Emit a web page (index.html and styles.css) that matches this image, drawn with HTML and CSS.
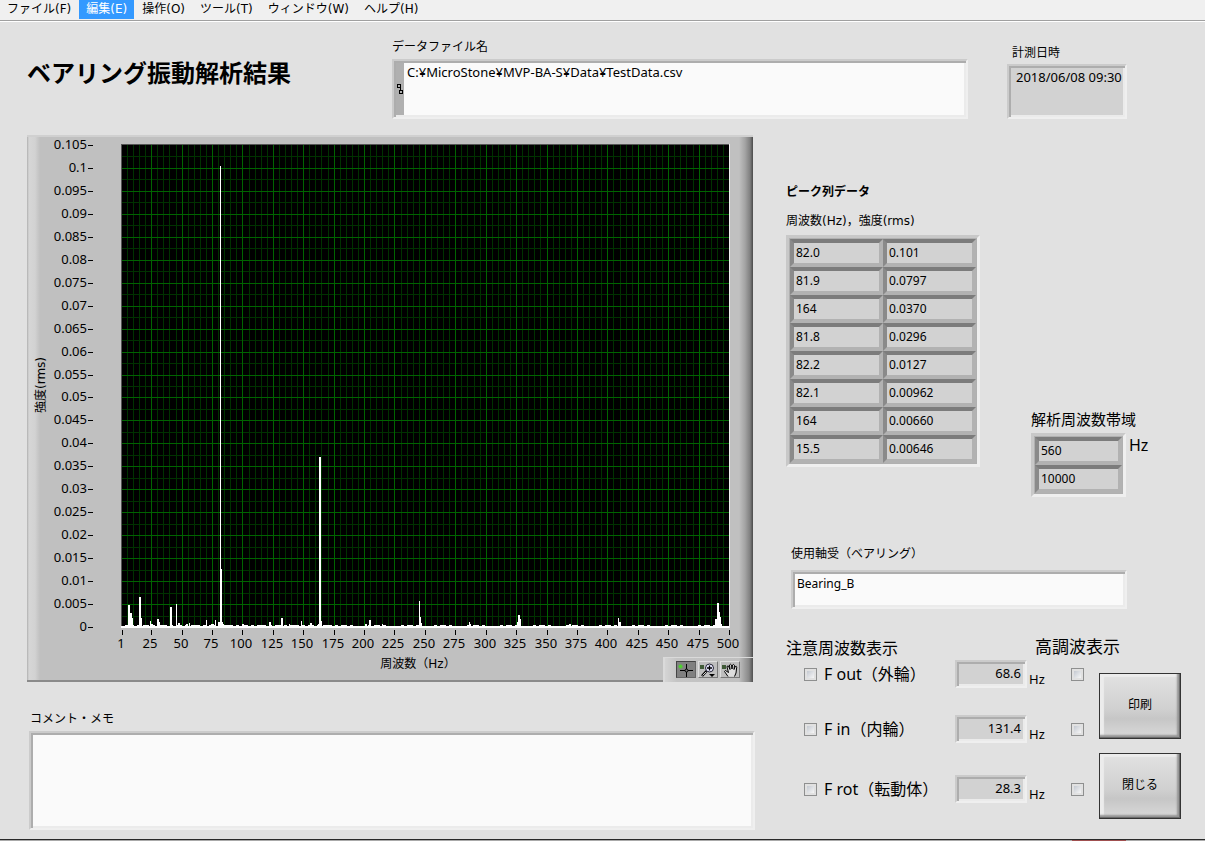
FILE: index.html
```html
<!DOCTYPE html>
<html lang="ja">
<head>
<meta charset="utf-8">
<meta name="viewport" content="width=device-width, initial-scale=1">
<title>ベアリング振動解析結果</title>
<link rel="stylesheet" href="styles.css">
</head>
<body>
<nav class="menu" aria-label="メニュー">
  <button type="button">ファイル(F)</button>
  <button type="button" class="active">編集(E)</button>
  <button type="button">操作(O)</button>
  <button type="button">ツール(T)</button>
  <button type="button">ウィンドウ(W)</button>
  <button type="button">ヘルプ(H)</button>
</nav>

<main class="panel">
  <header class="top">
    <h1>ベアリング振動解析結果</h1>
    <div class="field">
      <label for="path">データファイル名</label>
      <div class="sunken path-box">
        <span class="path-mark">
          <svg width="6" height="10" viewBox="0 0 6 10" fill="none" stroke="#000" shape-rendering="crispEdges" aria-hidden="true"><path d="M.5 .5h3v3h-3zM2.5 6.5h3v3h-3zM3.5 3.5v3"/></svg>
        </span>
        <textarea id="path" class="path-text" spellcheck="false">C:¥MicroStone¥MVP-BA-S¥Data¥TestData.csv</textarea>
      </div>
    </div>
    <div class="field date-field">
      <label for="date">計測日時</label>
      <output id="date" class="sunken date-box">2018/06/08 09:30</output>
    </div>
  </header>

  <div class="columns">
    <section class="left">
      <div class="graph">
        <svg id="chart" class="chart" viewBox="0 0 726 547" role="img" aria-label="周波数スペクトル"></svg>
        <div class="palette">
          <button type="button" class="tool on" aria-label="カーソル">
            <svg width="20" height="16" viewBox="0 0 20 16" aria-hidden="true"><path d="M10.500 2v13M4 8.500h13" stroke="#000"/><circle cx="10.500" cy="8.500" r="1.500" fill="#777" stroke="#000"/><path d="M4.500 2.500v4M2.500 4.500h4" stroke="#4bd52a" stroke-width="2"/></svg>
          </button>
          <button type="button" class="tool" aria-label="ズーム">
            <svg width="20" height="16" viewBox="0 0 20 16" aria-hidden="true"><path d="M2 3h4v4H2z" fill="#3f5a37"/><path d="M8.500 9 4 14" stroke="#000" stroke-width="2.500"/><path d="M8 10 4.500 13.500" stroke="#fff" stroke-width=".8"/><circle cx="11.500" cy="6" r="4" fill="#e8e8ff" stroke="#223"/><path d="M11.500 3.500v5M9 6h5" stroke="#000" stroke-width="1.300"/><path d="M11 12h6l-3 3z"/></svg>
          </button>
          <button type="button" class="tool" aria-label="パン">
            <svg width="20" height="16" viewBox="0 0 20 16" aria-hidden="true"><path d="M2 3h4v4H2z" fill="#3f5a37"/><path d="M8 14.500 4.500 9.500q.5-2 2.500 0l1.500 1L7 5q0-1.500 1.500-1L10 7.500 9.500 3q1-1.500 2 0l.5 4 .5-4q1-1.300 2 .3L14 7.500l1.200-3q1.300-.8 1.500.8L16 11l-1.500 3.500" fill="#ddd" stroke="#000"/></svg>
          </button>
        </div>
      </div>
      <div class="memo">
        <label for="memo">コメント・メモ</label>
        <textarea id="memo" class="sunken memo-box"></textarea>
      </div>
    </section>

    <section class="right">
      <div class="readouts">
        <div class="peaks">
          <h2>ピーク列データ</h2>
          <table class="array">
            <caption>周波数(Hz)，強度(rms)</caption>
            <tbody>
              <tr><td>82.0</td><td>0.101</td></tr>
              <tr><td>81.9</td><td>0.0797</td></tr>
              <tr><td>164</td><td>0.0370</td></tr>
              <tr><td>81.8</td><td>0.0296</td></tr>
              <tr><td>82.2</td><td>0.0127</td></tr>
              <tr><td>82.1</td><td>0.00962</td></tr>
              <tr><td>164</td><td>0.00660</td></tr>
              <tr><td>15.5</td><td>0.00646</td></tr>
            </tbody>
          </table>
        </div>
        <div class="band">
          <h2>解析周波数帯域</h2>
          <div class="band-row">
            <table class="array"><tbody><tr><td>560</td></tr><tr><td>10000</td></tr></tbody></table>
            <span>Hz</span>
          </div>
        </div>
      </div>

      <div class="bearing">
        <label for="bearing">使用軸受（ベアリング）</label>
        <input id="bearing" class="sunken" type="text" value="Bearing_B">
      </div>

      <div class="controls">
        <div class="freqs">
          <div class="freq-head"><h2>注意周波数表示</h2><h2 class="harmonic">高調波表示</h2></div>
          <div class="freq">
            <label class="name"><input type="checkbox">F out（外輪）</label>
            <output class="sunken value">68.6</output><span class="unit">Hz</span>
            <input type="checkbox" aria-label="F out 高調波表示">
          </div>
          <div class="freq">
            <label class="name"><input type="checkbox">F in（内輪）</label>
            <output class="sunken value">131.4</output><span class="unit">Hz</span>
            <input type="checkbox" aria-label="F in 高調波表示">
          </div>
          <div class="freq last">
            <label class="name"><input type="checkbox">F rot（転動体）</label>
            <output class="sunken value">28.3</output><span class="unit">Hz</span>
            <input type="checkbox" aria-label="F rot 高調波表示">
          </div>
        </div>
        <div class="actions">
          <button type="button">印刷</button>
          <button type="button">閉じる</button>
        </div>
      </div>
    </section>
  </div>
</main>
<footer class="edge"><span></span></footer>
<script src="chart.js"></script>
</body>
</html>
```

FILE: styles.css
```css
* { box-sizing: border-box; }

body {
  margin: 0;
  background: #e1e1e1;
  color: #000;
  font: 12px/18px "Noto Sans", "Noto Sans CJK JP", sans-serif;
}

button, input, textarea { font: inherit; color: inherit; margin: 0; }
h1, h2 { margin: 0; font-weight: 400; }

.menu {
  display: flex;
  gap: 1px;
  height: 22px;
  background: #f0f0f0;
  border-bottom: 1px solid #fff;
  box-shadow: inset 0 -1px #a0a0a0;
}
.menu button {
  height: 19px;
  padding: 0 7px 2px;
  border: 0;
  background: none;
  font-family: "DejaVu Sans", "Noto Sans CJK JP", sans-serif;
  line-height: 16px;
  white-space: nowrap;
}
.menu .active { background: #3399ff; color: #fff; }

.sunken {
  border: 2px solid;
  border-color: #cbcbcb #efefef #efefef #cbcbcb;
  box-shadow: inset 2px 2px #adadad, inset -2px -2px #ebebeb;
  border-radius: 0;
  outline: 0;
}

.panel { padding: 16px 24px 9px 27px; }

.top {
  display: grid;
  grid-template-columns: 326px minmax(200px, 1fr) 120px;
  column-gap: 39px;
  padding-right: 54px;
  align-items: end;
}
.top h1 {
  align-self: center;
  margin-bottom: 12px;
  font-size: 24px;
  line-height: 32px;
  font-weight: 700;
  white-space: nowrap;
}
.field { display: flex; flex-direction: column; gap: 3px; }
.date-field { gap: 2px; }
.date-field label { padding-left: 5px; }
.path-box { display: flex; height: 60px; padding: 2px; background: #fafafa; }
.path-mark {
  display: flex;
  align-items: center;
  justify-content: center;
  width: 8px;
  background: #b0b0b0;
}
.path-text {
  flex: 1;
  padding: 0 3px;
  border: 0;
  outline: 0;
  resize: none;
  background: #fafafa;
  font-size: 13px;
}
.date-box {
  display: block;
  height: 55px;
  padding: 2px 2px 0 7px;
  background: #d2d2d2;
  font-size: 13px;
  white-space: nowrap;
}

.columns {
  display: grid;
  grid-template-columns: minmax(0, 1fr) 395px;
  gap: 33px;
  margin-top: 16px;
}

.graph {
  position: relative;
  border-top: 2px solid #d0d0d0;
  border-bottom: 2px solid #8a8a8a;
  background:
    linear-gradient(90deg, #b0b0b0, #d6d6d6 2px, #d2d2d2 8px, #c0c0c0 13px, transparent 13px),
    linear-gradient(270deg, #4a4a4a, #808080 3px, #a4a4a4 8px, #c0c0c0 14px, #c0c0c0);
}
.chart { display: block; width: 100%; height: auto; margin: -2px 0; }
.chart text { font-size: 13px; }
.chart .title { font-family: "DejaVu Sans", "Noto Sans CJK JP", sans-serif; font-size: 12px; }
.palette {
  position: absolute;
  right: 0;
  bottom: -2px;
  display: flex;
  gap: 2px;
  padding: 3px 13px 4px 11px;
  border: 1px solid #dadada;
  border-width: 1px 0 0 2px;
  background: linear-gradient(90deg, #d4d4d4, #c4c4c4 12px, #c0c0c0 74px, #888 84px, #505050);
}
.tool {
  width: 20px;
  height: 17px;
  padding: 0;
  border: 1px solid;
  border-color: #dedede #777 #777 #dedede;
  background: #bebebe;
  overflow: hidden;
}
.tool.on { background: #808080; border-color: #444 #666 #666 #444; }
.tool svg { display: block; margin: -1px; }

.memo { display: flex; flex-direction: column; gap: 3px; margin: 28px -2px 0 2px; }
.memo label { padding-left: 1px; }
.memo-box {
  width: 100%;
  height: 99px;
  padding: 4px;
  resize: none;
  background: #fafafa;
}

.readouts { display: flex; align-items: flex-end; gap: 51px; margin-top: 48px; }
.peaks { padding-bottom: 30px; }
.peaks h2 { font-size: 12px; line-height: 18px; font-weight: 700; }
.array {
  border: 3px solid;
  border-color: #c8c8c8 #efefef #efefef #c8c8c8;
  border-collapse: separate;
  border-spacing: 0;
  background: #b0b0b0;
  padding: 1px;
}
.array caption {
  padding: 11px 0 5px;
  font-family: "DejaVu Sans", "Noto Sans CJK JP", sans-serif;
  text-align: left;
  white-space: nowrap;
}
.array td {
  width: 93px;
  height: 28px;
  padding: 0 2px;
  border: 4px solid;
  border-color: #7c7c7c #b2b2b2 #b2b2b2 #8a8a8a;
  background: #d2d2d2;
  line-height: 18px;
}
.band h2 { font-size: 15px; line-height: 22px; margin-bottom: 3px; white-space: nowrap; }
.band-row { display: flex; gap: 3px; }
.band-row .array td { width: 87px; }
.band-row span { font-size: 16px; line-height: 24px; }

.bearing { display: flex; flex-direction: column; gap: 7px; margin-top: 48px; padding: 0 54px 0 5px; }
.bearing input { height: 39px; padding: 0 4px 13px; background: #fafafa; }

.controls { display: flex; justify-content: space-between; margin-top: 26px; }
.freqs { display: flex; flex-direction: column; width: 304px; }
.freq-head { display: flex; align-items: flex-start; height: 25px; white-space: nowrap; }
.freq-head h2 { flex: 0 0 249px; font-size: 16px; line-height: 26px; }
.freq-head .harmonic { flex: none; font-size: 17px; line-height: 24px; }
.freq {
  display: grid;
  grid-template-columns: 151px 72px 44px 13px;
  align-items: center;
  padding-left: 18px;
}
.freq + .freq { margin-top: 27px; }
.freq + .last { margin-top: 32px; }
.name { display: flex; align-items: center; gap: 7px; font-size: 16px; line-height: 24px; white-space: nowrap; }
.value {
  height: 28px;
  padding: 2px 4px 0 0;
  background: #d2d2d2;
  text-align: right;
  font-size: 13px;
}
.unit { align-self: end; padding-left: 2px; font-size: 13px; }
input[type="checkbox"] {
  appearance: none;
  flex: none;
  width: 13px;
  height: 13px;
  border: 1px solid #8e8f8f;
  background: linear-gradient(135deg, #c4c9d1, #f6f6f6) content-box #f4f4f4;
  padding: 2px;
}
input[type="checkbox"]:checked { background-color: #3399ff; }

.actions { display: flex; flex-direction: column; gap: 14px; padding-top: 38px; }
.actions button {
  width: 82px;
  height: 66px;
  padding: 0 0 3px;
  border: 1px solid #333;
  background: linear-gradient(#e2e2e2, #d0d0d0 55%, #c6c6c6 70%, #dadada);
  box-shadow: inset -1px -1px #6c6c6c, inset -3px -3px 2px #949494, inset 4px 3px 1px #ececec;
}

.edge { height: 2px; background: #aaa; border-top: 1px solid #2a2a2a; }
.edge span { display: block; width: 54px; height: 1px; margin-left: 89%; background: #a05050; }
```

FILE: chart.js
```js
const NS = 'http://www.w3.org/2000/svg';
const chart = document.getElementById('chart');
const plot = { left: 95, right: 702, top: 10, bottom: 492 };
const px = f => Math.round(plot.left + (f - 1) * (plot.right - plot.left) / 499);
const py = v => Math.round(plot.bottom - v * (plot.bottom - plot.top) / 0.105);

function add(name, attrs, text) {
  const el = document.createElementNS(NS, name);
  for (const key in attrs) el.setAttribute(key, attrs[key]);
  if (text !== undefined) el.textContent = text;
  chart.appendChild(el);
}
const rect = (x, y, width, height, fill) => add('rect', { x, y, width, height, fill });

rect(94, 9, 608, 484, '#000');

// minor grid, then major grid
for (let f = 5; f < 500; f += 5) if (f % 25) rect(px(f), 10, 1, 482, '#003200');
for (let i = 1; i < 42; i += 2) rect(95, py(i * 0.0025), 607, 1, '#003200');
for (let f = 25; f < 500; f += 25) rect(px(f), 10, 1, 482, '#006400');
for (let i = 1; i < 21; i++) rect(95, py(i * 0.005), 607, 1, '#006400');
rect(94, 9, 608, 1, '#555');
rect(94, 9, 1, 484, '#555');

// spectrum lines: x, height, width
const peaks = [
  [101, 22, 2], [103, 14, 2], [105, 9, 1], [112, 30, 2], [114, 9, 1], [123, 6, 1], [124, 3, 2],
  [130, 8, 2], [132, 5, 1], [143, 20, 2], [149, 23, 1], [151, 4, 2], [159, 3, 2], [162, 4, 1],
  [179, 7, 1], [184, 3, 3], [188, 7, 1], [191, 5, 5], [193, 461, 1], [194, 58, 1], [196, 3, 1],
  [215, 3, 2], [242, 5, 2], [254, 9, 2], [262, 3, 1], [274, 6, 1], [283, 4, 2],
  [291, 3, 4], [292, 170, 2], [294, 6, 1], [338, 3, 2], [342, 7, 2], [355, 3, 1],
  [392, 26, 1], [393, 10, 1], [394, 4, 1], [442, 5, 1], [443, 3, 1],
  [490, 5, 4], [491, 12, 2], [493, 8, 1], [542, 3, 2], [591, 9, 1], [592, 5, 2],
  [688, 8, 2], [690, 24, 2], [692, 15, 1], [693, 10, 1], [694, 3, 1]
];
for (const [x, h, w] of peaks) rect(x, 492 - h, w, h, '#fff');
for (let x = 95; x < 700; x += 3) {
  const busy = x < 320 ? 8 : 4;
  if ((x * x + x * 7) % 11 < busy) rect(x, 490, 3, 2, '#fff');
}
rect(94, 491, 608, 2, '#fff');
rect(702, 9, 1, 484, '#eee');

for (let i = 0; i <= 21; i++) {
  const y = py(i * 0.005);
  rect(61, y, 5, 1, '#000');
  add('text', { x: 60, y: y + 4, 'text-anchor': 'end' }, String(+(i * 0.005).toFixed(3)));
}
for (let i = 0; i <= 20; i++) {
  const f = i ? i * 25 : 1;
  rect(px(f), 495, 1, 5, '#000');
  add('text', { x: px(f) - 1, y: 513, 'text-anchor': 'middle' }, String(f));
}
add('text', { x: 391, y: 533, 'text-anchor': 'middle', class: 'title' }, '周波数（Hz）');
add('text', { x: 0, y: 0, 'text-anchor': 'middle', class: 'title', transform: 'translate(18 250) rotate(-90)' }, '強度(rms)');
```
